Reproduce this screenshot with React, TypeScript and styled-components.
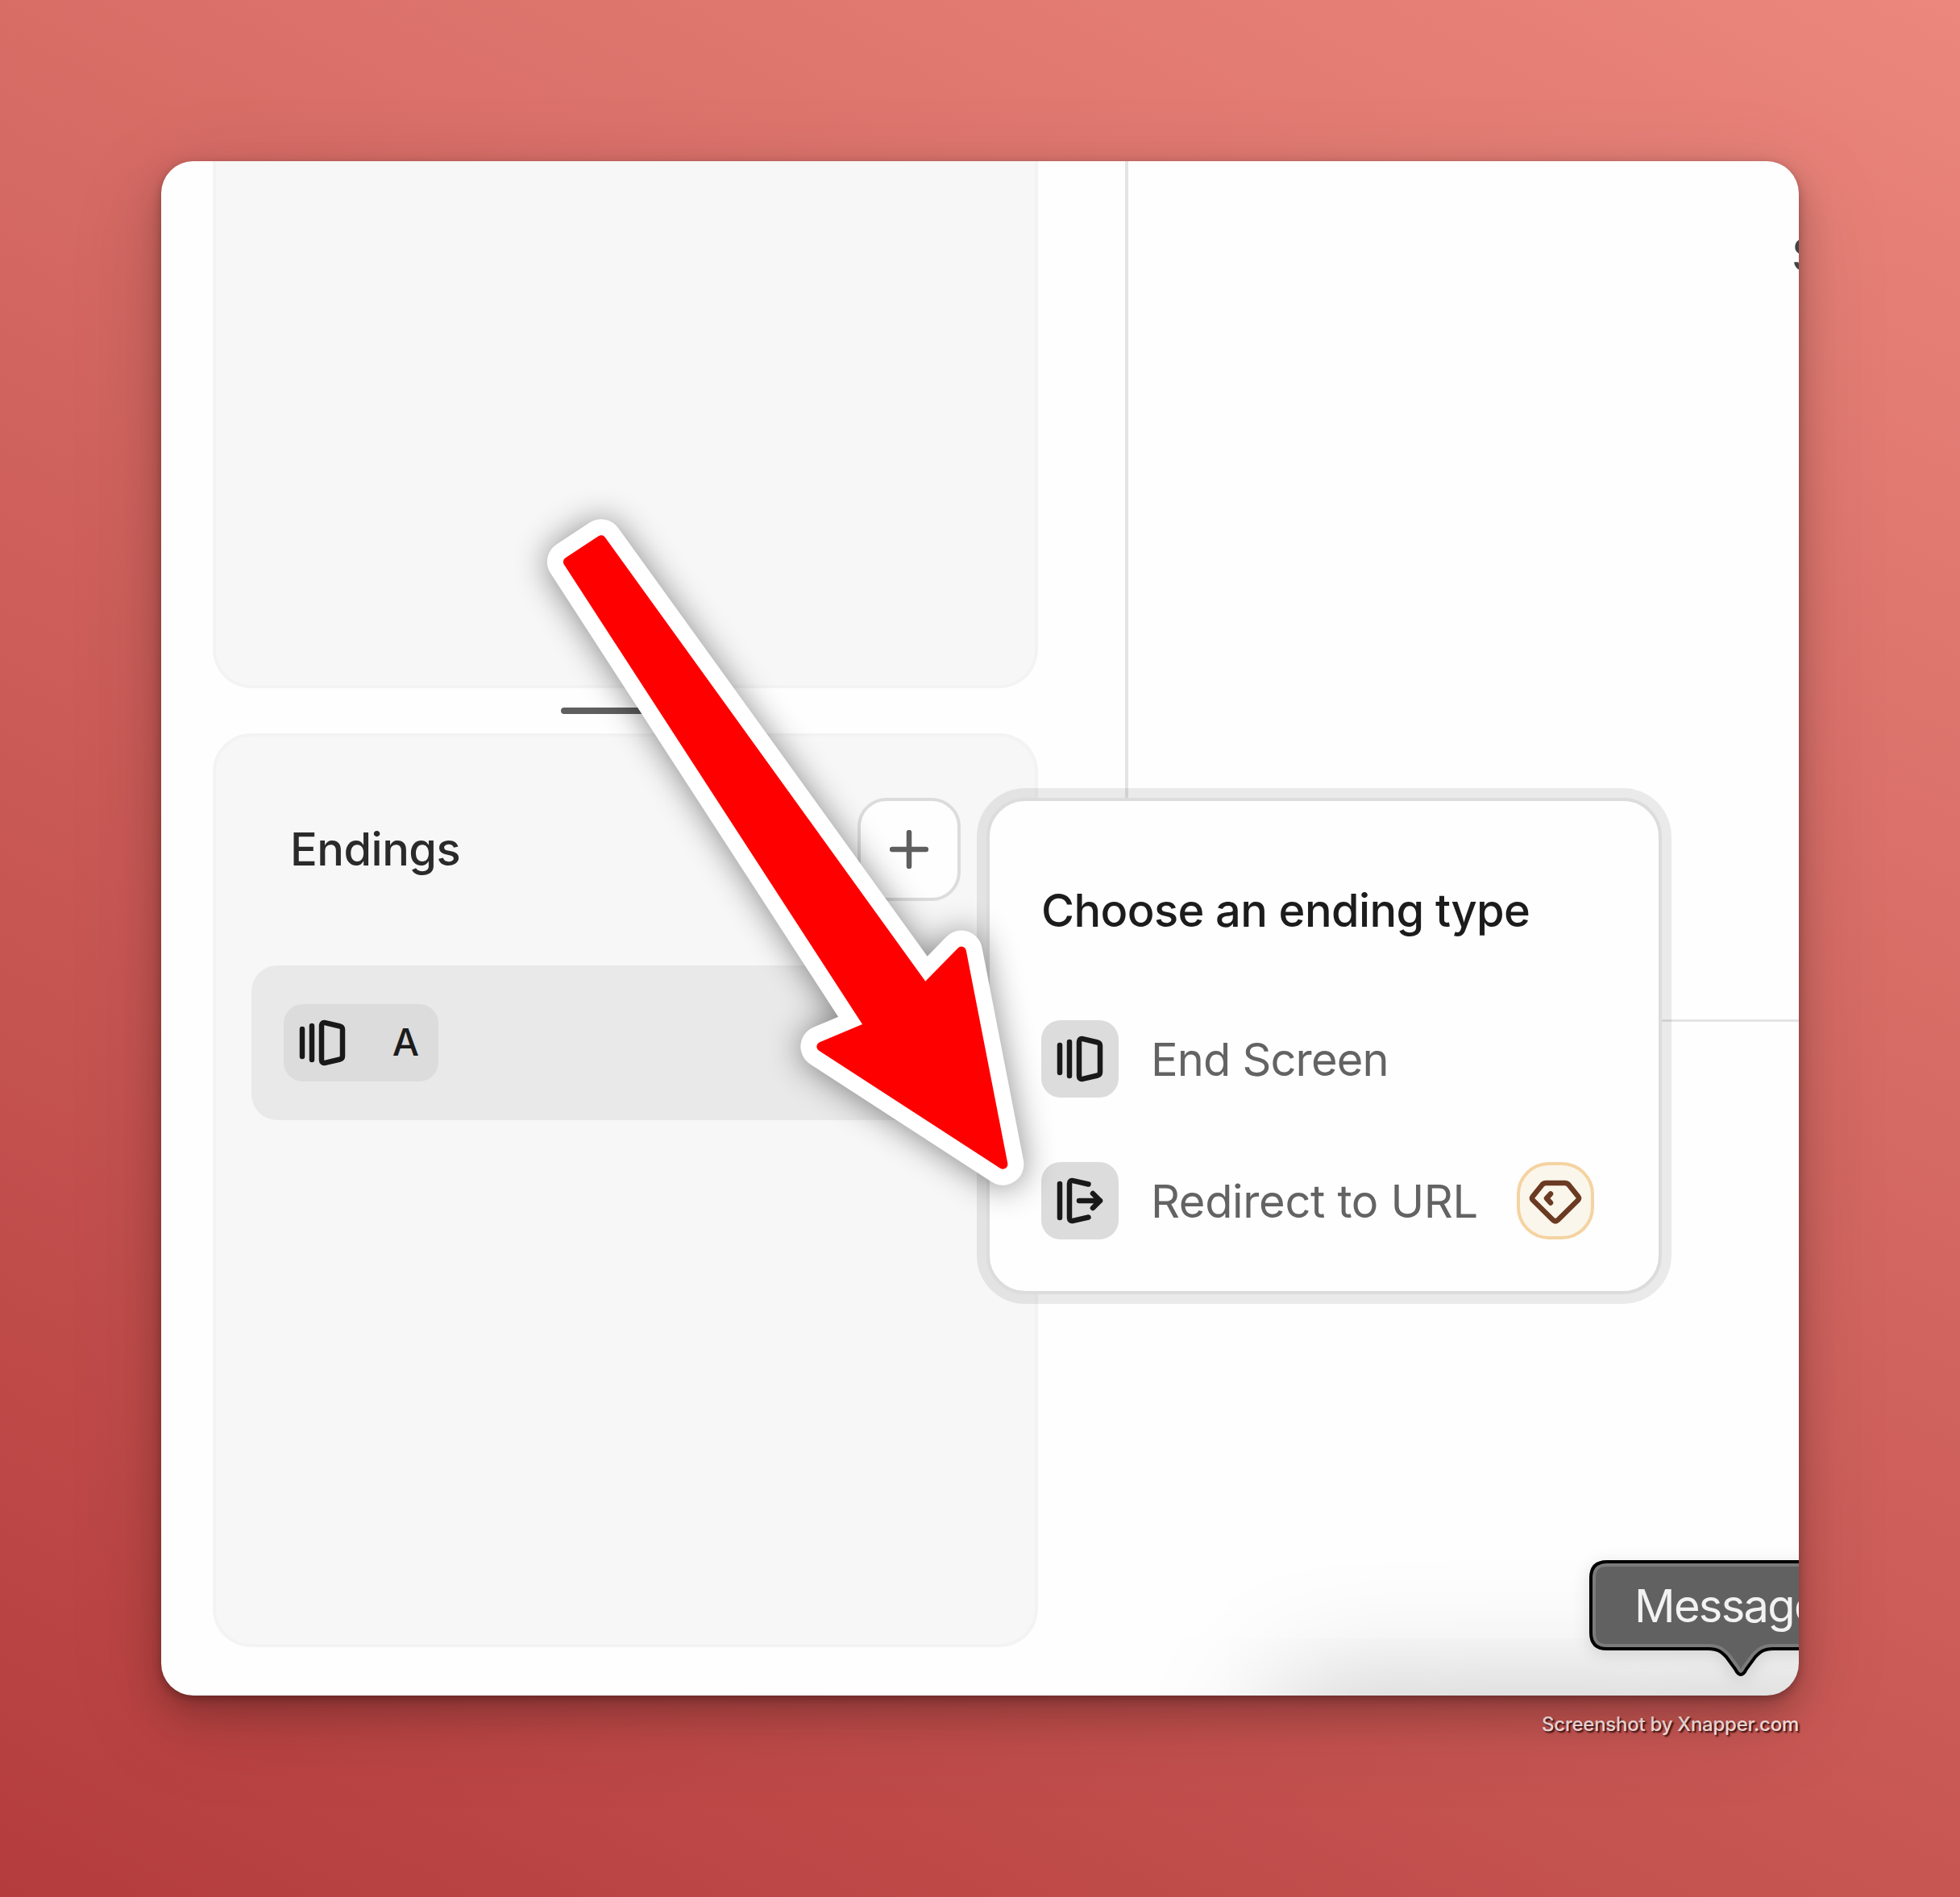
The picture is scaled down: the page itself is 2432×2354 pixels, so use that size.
import React from "react";
import styled, { createGlobalStyle } from "styled-components";

const GlobalStyle = createGlobalStyle`
  *, *::before, *::after { box-sizing: border-box; }
  body { margin: 0; font-family: Inter, "Liberation Sans", sans-serif; }
`;

const Backdrop = styled.main`
  width: 2432px;
  height: 2354px;
  padding: 200px;
  overflow: hidden;
  background: linear-gradient(27deg, #b43c3c 0%, #eb877d 100%);
`;

const Window = styled.section`
  position: relative;
  display: flex;
  width: 2032px;
  height: 1904px;
  border-radius: 40px;
  background: #fefefe;
  box-shadow:
    0 4px 12px rgba(0, 0, 0, 0.26),
    0 20px 44px rgba(0, 0, 0, 0.22),
    0 30px 120px rgba(0, 0, 0, 0.13);
`;

const Content = styled.div`
  position: relative;
  display: flex;
  flex: 1;
  overflow: hidden;
  border-radius: inherit;
`;

const Sidebar = styled.aside`
  display: flex;
  flex-direction: column;
  width: 1196px;
  padding: 0 108px 60px 64px;
`;

const Panel = styled.div<{ $top?: boolean }>`
  display: flex;
  flex-direction: column;
  height: ${(p) => (p.$top ? "654px" : "1134px")};
  border: 4px solid #f3f3f3;
  border-top-width: ${(p) => (p.$top ? "0" : "4px")};
  border-radius: ${(p) => (p.$top ? "0 0 48px 48px" : "48px")};
  background: #f7f7f7;
  padding: ${(p) => (p.$top ? "0" : "76px 44px")};
`;

const Divider = styled.div`
  display: flex;
  align-items: center;
  justify-content: center;
  height: 56px;
`;

const Handle = styled.div`
  width: 160px;
  height: 8px;
  border-radius: 4px;
  background: #5f5f5f;
`;

const PanelHeader = styled.header`
  display: flex;
  align-items: center;
  justify-content: space-between;
  height: 128px;
  padding: 0 48px;
`;

const Heading = styled.h2<{ $color: string; $tracking: string }>`
  margin: 0;
  padding-top: 1px;
  font-size: 56px;
  line-height: 79px;
  font-weight: 500;
  letter-spacing: ${(p) => p.$tracking};
  color: ${(p) => p.$color};
  white-space: nowrap;
`;

const AddButton = styled.button`
  display: grid;
  place-items: center;
  width: 128px;
  height: 128px;
  padding: 0;
  border: 4px solid #dcdcdc;
  border-radius: 36px;
  background: #fefefe;
`;

const EndingRow = styled.div`
  display: flex;
  align-items: center;
  height: 192px;
  margin-top: 80px;
  padding: 0 40px;
  border-radius: 32px;
  background: #e9e9e9;
`;

const Tag = styled.div`
  display: flex;
  align-items: center;
  justify-content: space-between;
  width: 192px;
  height: 96px;
  padding: 0 24px 0 16px;
  border-radius: 24px;
  background: #dcdcdc;
`;

const TagLetter = styled.span`
  padding-bottom: 2px;
  font-size: 47px;
  font-weight: 500;
  line-height: 64px;
  color: #1c1c1c;
`;

const Canvas = styled.div`
  width: 836px;
  height: 1068px;
  padding: 70px 0 0 823px;
  border-left: 4px solid #e4e4e4;
  border-bottom: 3px solid #e4e4e4;
`;

const CanvasText = styled.div`
  font-size: 56px;
  line-height: 92px;
  font-weight: 400;
  color: #444;
`;

const Glow = styled.div`
  position: absolute;
  left: 1379px;
  top: 1904px;
  width: 1200px;
  height: 200px;
  border-radius: 60px;
  box-shadow: 0 0 160px rgba(0, 0, 0, 0.25);
`;

const Popup = styled.div`
  position: absolute;
  left: 1024px;
  top: 790px;
  display: flex;
  flex-direction: column;
  width: 838px;
  height: 616px;
  padding: 96px 64px 64px;
  border: 4px solid #dcdcdc;
  border-radius: 48px;
  background: #fefefe;
  background-clip: padding-box;
  box-shadow: 0 0 0 12px rgba(0, 0, 0, 0.08);
`;

const Options = styled.div`
  display: flex;
  flex-direction: column;
  gap: 80px;
  margin-top: 96px;
`;

const Option = styled.div`
  display: flex;
  align-items: center;
  height: 96px;
`;

const IconTile = styled.div`
  display: grid;
  place-items: center;
  width: 96px;
  height: 96px;
  border-radius: 24px;
  background: #dcdcdc;
`;

const OptionLabel = styled.span<{ $tracking: string }>`
  margin-left: 40px;
  padding-top: 1px;
  width: 454px;
  font-size: 56px;
  line-height: 80px;
  letter-spacing: ${(p) => p.$tracking};
  color: #636363;
  white-space: nowrap;
`;

const PlanBadge = styled.div`
  display: grid;
  place-items: center;
  width: 96px;
  height: 96px;
  border: 4px solid #f5d3a1;
  border-radius: 40px;
  background: #fbf6eb;
`;

const Tooltip = styled.div`
  position: absolute;
  left: 1772px;
  top: 1736px;
  width: 560px;
  height: 148px;
  filter: drop-shadow(0 4px 10px rgba(0, 0, 0, 0.12));
`;

const TooltipShape = styled.svg`
  position: absolute;
  inset: 0;
`;

const TooltipText = styled.span`
  position: relative;
  display: block;
  padding: 1px 0 0 56px;
  font-size: 56px;
  line-height: 112px;
  letter-spacing: -1.7px;
  color: #f2f2f2;
`;

const Pointer = styled.svg`
  position: absolute;
  left: 400px;
  top: 400px;
  overflow: visible;
  filter: drop-shadow(0 2px 20px rgba(0, 0, 0, 0.46));
`;

const Credit = styled.footer`
  padding-top: 18px;
  text-align: right;
  font-size: 24px;
  line-height: 36px;
  font-weight: 500;
  letter-spacing: -0.25px;
  color: #ffe9e6;
  text-shadow: 2px 2px 2px rgba(30, 0, 0, 0.85);
`;

const stroke = {
  fill: "none",
  stroke: "#191919",
  strokeWidth: 6.5,
  strokeLinecap: "round" as const,
  strokeLinejoin: "round" as const,
};

const EndScreenIcon = () => (
  <svg width="64" height="64" viewBox="0 0 64 64" {...stroke}>
    <path d="M7 15V49M19 11V53" />
    <path d="M31 10.5C31 8 33 6.600 35.500 7.200L54 11.500Q57 12.400 57 15.500V48.500Q57 51.600 54 52.500L35.500 56.800C33 57.400 31 56 31 53.500Z" />
  </svg>
);

const RedirectIcon = () => (
  <svg width="64" height="64" viewBox="0 0 64 64" {...stroke}>
    <path d="M7 11V53" />
    <path d="M42.500 11.500L23.500 7.200C21 6.600 19 8 19 10.500V53.500C19 56 21 57.400 23.500 56.800L42.500 52.500" />
    <path d="M31 32H57M48 23L57 32L48 41" />
  </svg>
);

const GemIcon = () => (
  <svg width="72" height="72" viewBox="0 0 72 72" {...stroke} stroke="#6b3a22">
    <path d="M24.500 14H47.500Q50.500 14 52.500 16.200L64 30.500Q66 33 64 35.300L39.500 59.500Q36 63 32.500 59.500L8 35.300Q6 33 8 30.500L19.500 16.200Q21.500 14 24.500 14Z" />
    <path d="M30 27.500L25 33L30 38.500" />
  </svg>
);

const PlusIcon = () => (
  <svg width="48" height="48" viewBox="0 0 48 48" {...stroke} stroke="#5f5f5f">
    <path d="M24 3V45M3 24H45" />
  </svg>
);

const arrowPath =
  "M145.900 70.200L547.600 626.900L592.900 580.600L644.400 844.700L419.400 698.700L478.900 673.800L104.900 97.200Z";

const bubblePath =
  "M22 2H640V110H228C216 110 212 114 206 120L195 135Q188 149 181 135L170 120C164 114 160 110 148 110H22Q2 110 2 90V22Q2 2 22 2Z";

export default function App() {
  return (
    <>
      <GlobalStyle />
      <Backdrop>
        <Window>
          <Content>
            <Sidebar>
              <Panel $top />
              <Divider>
                <Handle />
              </Divider>
              <Panel>
                <PanelHeader>
                  <Heading $color="#2a2a2a" $tracking="-0.5px">Endings</Heading>
                  <AddButton aria-label="Add ending">
                    <PlusIcon />
                  </AddButton>
                </PanelHeader>
                <EndingRow>
                  <Tag>
                    <EndScreenIcon />
                    <TagLetter>A</TagLetter>
                  </Tag>
                </EndingRow>
              </Panel>
            </Sidebar>
            <Canvas>
              <CanvasText>S</CanvasText>
            </Canvas>
            <Glow />
            <Tooltip>
              <TooltipShape width="560" height="148" viewBox="0 0 560 148">
                <clipPath id="bubble">
                  <path d={bubblePath} />
                </clipPath>
                <path d={bubblePath} fill="#616161" />
                <path d={bubblePath} fill="none" stroke="#7b7b7b" strokeWidth="12" clipPath="url(#bubble)" />
                <path d={bubblePath} fill="none" stroke="#000" strokeWidth="4" />
              </TooltipShape>
              <TooltipText>Message</TooltipText>
            </Tooltip>
          </Content>
          <Popup>
            <Heading $color="#1c1c1c" $tracking="-0.62px">Choose an ending type</Heading>
            <Options>
              <Option>
                <IconTile>
                  <EndScreenIcon />
                </IconTile>
                <OptionLabel $tracking="-0.85px">End Screen</OptionLabel>
              </Option>
              <Option>
                <IconTile>
                  <RedirectIcon />
                </IconTile>
                <OptionLabel $tracking="-0.35px">Redirect to URL</OptionLabel>
                <PlanBadge>
                  <GemIcon />
                </PlanBadge>
              </Option>
            </Options>
          </Popup>
          <Pointer width="720" height="920" viewBox="0 0 720 920" strokeLinejoin="round">
            <path d={arrowPath} fill="#fff" stroke="#fff" strokeWidth="52" />
            <path d={arrowPath} fill="#f00" stroke="#f00" strokeWidth="12" />
          </Pointer>
        </Window>
        <Credit>Screenshot by Xnapper.com</Credit>
      </Backdrop>
    </>
  );
}
